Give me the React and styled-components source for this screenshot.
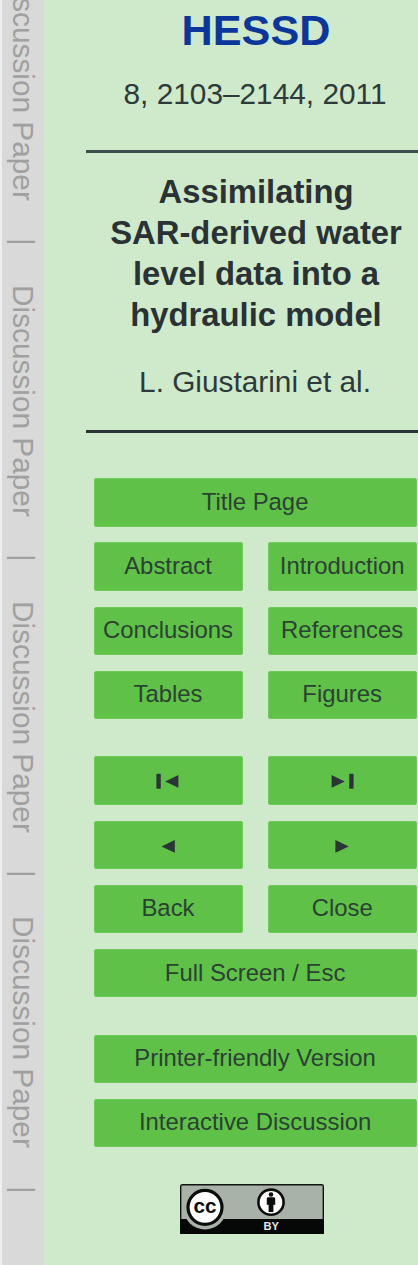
import React from "react";
import styled, { createGlobalStyle } from "styled-components";

const GlobalStyle = createGlobalStyle`
  *, *::before, *::after { box-sizing: border-box; }
  body {
    margin: 0;
    background: #cfeaca;
    font-family: "Liberation Sans", Arial, sans-serif;
    color: #2d3a3b;
  }
`;

const Page = styled.div`
  display: flex;
  width: 418px;
  height: 1265px;
  overflow: hidden;
  background: #cfeaca;
`;

const Strip = styled.aside`
  flex: none;
  width: 44px;
  height: 100%;
  overflow: hidden;
  border-left: 2px solid #efefef;
  background: #d9d9d9;
  color: #a0a0a0;
`;

const StripTrack = styled.div`
  margin-top: -31px;
`;

const StripItem = styled.div`
  display: flex;
  gap: 37.6px;
  width: 42px;
  height: 315.8px;
  writing-mode: vertical-rl;
  font-size: 29.8px;
  line-height: 42px;
  white-space: nowrap;
`;

const Panel = styled.main`
  flex: 1;
  min-width: 0;
  display: flex;
  flex-direction: column;
  padding: 5px 0 0 42px;
`;

const Journal = styled.h1`
  margin: 0;
  padding-left: 8px;
  font-size: 43.2px;
  line-height: 50px;
  text-align: center;
  color: #0c369b;
`;

const Meta = styled.p`
  margin: ${(p) => p.$top}px 0 0;
  padding-left: 6px;
  font-size: 29.8px;
  line-height: 40px;
  text-align: center;
  white-space: nowrap;
`;

const Rule = styled.hr`
  width: 100%;
  height: 3px;
  margin: ${(p) => p.$top}px 0 0;
  border: 0;
  background: ${(p) => p.$color};
`;

const Title = styled.h2`
  margin: 18px 0 0;
  padding-left: 8px;
  font-size: 32.8px;
  line-height: 41px;
  text-align: center;
  white-space: nowrap;
  color: #2a3235;
`;

const Nav = styled.nav`
  display: flex;
  flex-direction: column;
  gap: 37.3px;
  margin-top: 45.2px;
  padding-left: 8px;
`;

const Group = styled.div`
  display: grid;
  grid-template-columns: 149px 149px;
  grid-auto-rows: 48.4px;
  gap: 15.8px 25.2px;
`;

const Button = styled.button`
  display: flex;
  align-items: center;
  justify-content: center;
  grid-column: ${(p) => (p.$wide ? "1 / -1" : "auto")};
  margin: 0;
  padding: 0 1px 1.4px 0;
  border: 1px solid #6fca59;
  border-radius: 2px;
  background: #5fc148;
  color: #2b4233;
  font-family: inherit;
  font-size: 23.9px;
  line-height: 28px;
  white-space: nowrap;
`;

const Arrow = styled.svg`
  display: block;
  width: 24px;
  height: 16px;
  margin-top: 3px;
  fill: #2b3538;
`;

const License = styled.svg`
  display: block;
  width: 144px;
  height: 50px;
  margin: 37px 0 0 93.5px;
  font-family: "Liberation Sans", Arial, sans-serif;
  font-weight: bold;
`;

const arrows = {
  First: (
    <>
      <rect x="0.4" y="0.8" width="4.4" height="15" rx="0.8" />
      <path d="M22.4 2v12.8L9.2 8.4z" />
    </>
  ),
  Last: (
    <>
      <rect x="19.2" y="0.8" width="4.4" height="15" rx="0.8" />
      <path d="M1.6 2v12.8l13.2-6.4z" />
    </>
  ),
  Previous: <path d="M18.8 2v12.8L5.4 8.4z" />,
  Next: <path d="M5.4 2v12.8l13.4-6.4z" />,
};

const groups = [
  [["Title Page", true], ["Abstract"], ["Introduction"], ["Conclusions"], ["References"], ["Tables"], ["Figures"]],
  [["First"], ["Last"], ["Previous"], ["Next"], ["Back"], ["Close"], ["Full Screen / Esc", true]],
  [["Printer-friendly Version", true], ["Interactive Discussion", true]],
];

function NavButton({ label, wide }) {
  const icon = arrows[label];
  return (
    <Button type="button" $wide={wide} aria-label={icon ? label : undefined}>
      {icon ? <Arrow viewBox="0 0 24 16" aria-hidden="true">{icon}</Arrow> : label}
    </Button>
  );
}

function LicenseBadge() {
  return (
    <License viewBox="0 0 144 50">
      <rect x="0.7" y="0.7" width="142.6" height="48.6" rx="1.5" fill="#a9b2a8" stroke="#101512" strokeWidth="1.4" />
      <path d="M0 35H144v15H0z" fill="#060807" />
      <circle cx="25" cy="24" r="21.5" fill="#a9b2a8" />
      <circle cx="25" cy="23.3" r="17" fill="#fff" stroke="#0a0d0b" strokeWidth="3.2" />
      <text x="25" y="28.8" fontSize="20.5" textAnchor="middle" textLength="23" lengthAdjust="spacingAndGlyphs" fill="#0a0d0b">cc</text>
      <circle cx="91" cy="18.2" r="12.6" fill="#fff" stroke="#0a0d0b" strokeWidth="2.6" />
      <circle cx="91" cy="10.5" r="2.3" fill="#0a0d0b" />
      <path d="M88.2 13.2h5.6q1.4 0 1.4 1.4v6.2h-1.8v7.2h-4.8v-7.2h-1.8v-6.2q0-1.4 1.4-1.4z" fill="#0a0d0b" />
      <text x="91.2" y="46.3" fontSize="10.5" textAnchor="middle" textLength="15.5" lengthAdjust="spacingAndGlyphs" fill="#e6e6e6">BY</text>
    </License>
  );
}

export default function App() {
  return (
    <Page>
      <GlobalStyle />
      <Strip>
        <StripTrack>
          {[0, 1, 2, 3].map((i) => (
            <StripItem key={i}>
              <span>Discussion Paper</span>
              <span>|</span>
            </StripItem>
          ))}
        </StripTrack>
      </Strip>
      <Panel>
        <Journal>HESSD</Journal>
        <Meta $top={19}>8, 2103–2144, 2011</Meta>
        <Rule $top={36} $color="#3d4e4c" />
        <Title>
          Assimilating
          <br />
          SAR-derived water
          <br />
          level data into a
          <br />
          hydraulic model
        </Title>
        <Meta $top={27}>L. Giustarini et al.</Meta>
        <Rule $top={28} $color="#2b3538" />
        <Nav>
          {groups.map((items, i) => (
            <Group key={i}>
              {items.map(([label, wide]) => (
                <NavButton key={label} label={label} wide={wide} />
              ))}
            </Group>
          ))}
        </Nav>
        <LicenseBadge />
      </Panel>
    </Page>
  );
}
